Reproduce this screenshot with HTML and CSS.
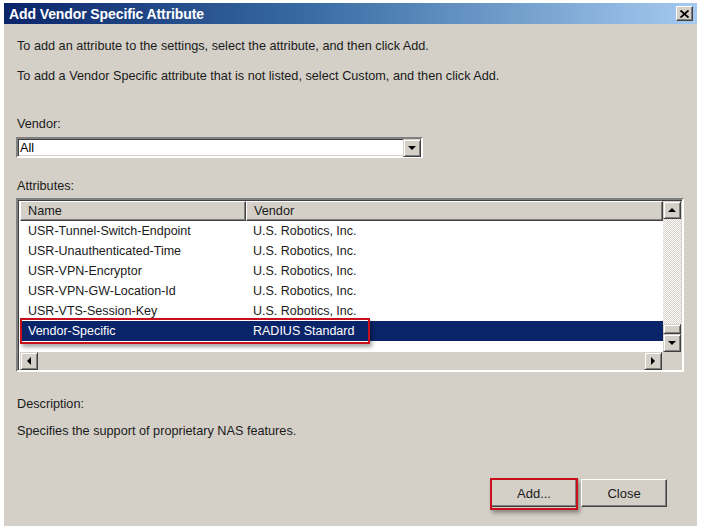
FILE: index.html
```html
<!DOCTYPE html>
<html>
<head>
<meta charset="utf-8">
<link rel="stylesheet" href="styles.css">
</head>
<body>
<div class="window">
  <div class="titlebar">
    <span class="title">Add Vendor Specific Attribute</span>
    <span class="xbtn"><svg width="9" height="8" viewBox="0 0 9 8"><path d="M0.5 0.5 L8.5 7.5 M8.5 0.5 L0.5 7.5" stroke="#000" stroke-width="1.8" fill="none"/></svg></span>
  </div>
  <div class="content">
    <p class="line l1">To add an attribute to the settings, select the attribute, and then click Add.</p>
    <p class="line l2">To add a Vendor Specific attribute that is not listed, select Custom, and then click Add.</p>
    <p class="line l3">Vendor:</p>
    <div class="combo">
      <span class="combo-val">All</span>
      <span class="sbtn combo-btn"><i class="tri down"></i></span>
    </div>
    <p class="line l4">Attributes:</p>
    <div class="list">
      <div class="list-main">
        <div class="list-body">
          <div class="hdr">
            <span class="hc c1">Name</span>
            <span class="hc c2">Vendor</span>
          </div>
          <div class="row"><span class="c1">USR-Tunnel-Switch-Endpoint</span><span class="c2">U.S. Robotics, Inc.</span></div>
          <div class="row"><span class="c1">USR-Unauthenticated-Time</span><span class="c2">U.S. Robotics, Inc.</span></div>
          <div class="row"><span class="c1">USR-VPN-Encryptor</span><span class="c2">U.S. Robotics, Inc.</span></div>
          <div class="row"><span class="c1">USR-VPN-GW-Location-Id</span><span class="c2">U.S. Robotics, Inc.</span></div>
          <div class="row"><span class="c1">USR-VTS-Session-Key</span><span class="c2">U.S. Robotics, Inc.</span></div>
          <div class="row sel"><span class="c1">Vendor-Specific</span><span class="c2">RADIUS Standard</span><span class="redbox rb-row"></span></div>
        </div>
        <div class="vscroll">
          <span class="sbtn"><i class="tri up"></i></span>
          <span class="track"></span>
          <span class="thumb"></span>
          <span class="sbtn"><i class="tri down"></i></span>
        </div>
      </div>
      <div class="hscroll">
        <span class="sbtn"><i class="tri left"></i></span>
        <span class="htrack"></span>
        <span class="sbtn"><i class="tri right"></i></span>
        <span class="corner"></span>
      </div>
    </div>
    <p class="line l5">Description:</p>
    <p class="line l6">Specifies the support of proprietary NAS features.</p>
    <div class="buttons">
      <span class="btn add">Add...<span class="redbox rb-btn"></span></span>
      <span class="btn">Close</span>
    </div>
  </div>
</div>
</body>
</html>
```
FILE: styles.css
```css
* { box-sizing: border-box; }
body {
  margin: 0;
  background: #ffffff;
  font-family: "Liberation Sans", Arial, sans-serif;
  font-size: 12.7px;
  color: #000;
}
.window {
  margin: 3px 0 0 4px;
  width: 693px;
  height: 523px;
  background: #d4d0c8;
  display: flex;
  flex-direction: column;
}
.titlebar {
  height: 21px;
  background: linear-gradient(to right, #0a246a 0%, #3a6ea5 45%, #a6caf0 100%);
  display: flex;
  align-items: center;
  justify-content: space-between;
  padding: 0 4px 0 5px;
}
.title {
  color: #fff;
  font-weight: bold;
  font-size: 14px;
  letter-spacing: -0.1px;
}
.xbtn {
  width: 17px;
  height: 15px;
  background: #d4d0c8;
  border: 1px solid;
  border-color: #fff #404040 #404040 #fff;
  box-shadow: inset -1px -1px 0 #808080;
  display: flex;
  align-items: center;
  justify-content: center;
}
.content {
  padding: 0 13px 0 12px;
  display: flex;
  flex-direction: column;
}
.line {
  margin: 0;
  line-height: 16px;
  height: 16px;
  padding-left: 1px;
  color: #1a1a1a;
}
.l1 { margin-top: 14px; }
.l2 { margin-top: 14px; }
.l3 { margin-top: 32px; }
.l4 { margin-top: 20px; }
.l5 { margin-top: 24px; }
.l6 { margin-top: 11px; }

.combo {
  margin-top: 5px;
  width: 407px;
  height: 21px;
  background: #fff;
  border: 2px solid;
  border-color: #808080 #fff #fff #808080;
  box-shadow: inset 1px 1px 0 #404040, inset -1px -1px 0 #d4d0c8;
  display: flex;
  align-items: center;
  justify-content: space-between;
}
.combo-val { padding-left: 2px; }
.combo-btn { width: 17px; height: 17px; margin-right: 0; }

.sbtn {
  width: 18px;
  height: 18px;
  background: #d4d0c8;
  border: 1px solid;
  border-color: #d4d0c8 #404040 #404040 #d4d0c8;
  box-shadow: inset 1px 1px 0 #fff, inset -1px -1px 0 #808080;
  display: flex;
  align-items: center;
  justify-content: center;
  flex: none;
}
.tri { width: 0; height: 0; border: 4px solid transparent; display: block; }
.tri.down { border-top-color: #000; border-bottom-width: 0; }
.tri.up { border-bottom-color: #000; border-top-width: 0; }
.tri.left { border-right-color: #000; border-left-width: 0; }
.tri.right { border-left-color: #000; border-right-width: 0; }

.list {
  margin-top: 4px;
  width: 668px;
  height: 174px;
  background: #fff;
  border: 2px solid;
  border-color: #808080 #fff #fff #808080;
  box-shadow: inset 1px 1px 0 #404040, inset -1px -1px 0 #d4d0c8;
  padding: 1px 1px 0 2px;
  display: flex;
  flex-direction: column;
}
.list-main { display: flex; height: 151px; }
.list-body { flex: 1; position: relative; }
.hdr {
  display: flex;
  height: 20px;
  background: #d4d0c8;
}
.hc {
  border: 1px solid;
  border-color: #fff #404040 #404040 #fff;
  box-shadow: inset -1px -1px 0 #808080;
  display: flex;
  align-items: center;
  padding-left: 7px;
  color: #1a1a1a;
}
.hdr .c1 { width: 226px; }
.hdr .c2 { flex: 1; }
.row {
  display: flex;
  height: 20px;
  align-items: center;
  position: relative;
  color: #1a1a1a;
  font-size: 12.5px;
}
.row .c1 { width: 226px; padding-left: 8px; }
.row .c2 { padding-left: 7px; }
.row.sel { background: #0a246a; color: #fff; }

.vscroll {
  width: 18px;
  display: flex;
  flex-direction: column;
  background: #d4d0c8;
}
.track {
  flex: 1;
  background-color: #fff;
  background-image: repeating-conic-gradient(#d4d0c8 0 25%, #fff 0 50%);
  background-size: 2px 2px;
}
.thumb {
  height: 10px;
  background: #d4d0c8;
  border: 1px solid;
  border-color: #d4d0c8 #404040 #404040 #d4d0c8;
  box-shadow: inset 1px 1px 0 #fff, inset -1px -1px 0 #808080;
}
.hscroll { display: flex; height: 18px; background: #d4d0c8; }
.htrack { flex: 1; background: #d4d0c8; }
.corner { width: 19px; background: #d4d0c8; }

.redbox {
  position: absolute;
  border: 2px solid #c8101c;
  box-shadow: 2px 3px 4px rgba(0,0,0,0.35);
  pointer-events: none;
}
.rb-row { left: 0; top: -3px; width: 350px; height: 26px; }

.buttons {
  margin-top: 40px;
  display: flex;
  justify-content: flex-end;
  gap: 4px;
  padding-right: 17px;
}
.btn {
  position: relative;
  width: 86px;
  height: 28px;
  background: #d4d0c8;
  border: 1px solid;
  border-color: #fff #404040 #404040 #fff;
  box-shadow: inset -1px -1px 0 #808080;
  display: flex;
  align-items: center;
  justify-content: center;
  font-size: 13px;
  color: #1a1a1a;
}
.rb-btn { left: -2px; top: -2px; width: 88px; height: 32px; }
```
